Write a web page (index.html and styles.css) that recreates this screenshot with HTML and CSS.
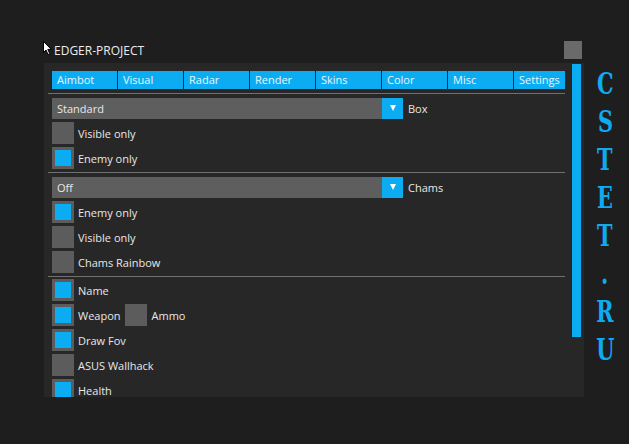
FILE: index.html
```html
<!DOCTYPE html>
<html>
<head>
<meta charset="utf-8">
<link rel="stylesheet" href="styles.css">
</head>
<body>
<div class="app">
  <div class="window">
    <div class="titlebar">
      <span class="title">EDGER-PROJECT</span>
      <span class="close"></span>
    </div>
    <div class="panel">
      <div class="content">
        <div class="tabs">
          <span class="tab">Aimbot</span>
          <span class="tab">Visual</span>
          <span class="tab">Radar</span>
          <span class="tab">Render</span>
          <span class="tab">Skins</span>
          <span class="tab">Color</span>
          <span class="tab">Misc</span>
          <span class="tab">Settings</span>
        </div>
        <div class="sep first"></div>
        <div class="row">
          <div class="combo"><span class="combo-value">Standard</span><span class="combo-btn"></span></div>
          <span class="combo-label">Box</span>
        </div>
        <div class="row"><span class="cb"></span><span class="label">Visible only</span></div>
        <div class="row"><span class="cb on"></span><span class="label">Enemy only</span></div>
        <div class="sep"></div>
        <div class="row">
          <div class="combo"><span class="combo-value">Off</span><span class="combo-btn"></span></div>
          <span class="combo-label">Chams</span>
        </div>
        <div class="row"><span class="cb on"></span><span class="label">Enemy only</span></div>
        <div class="row"><span class="cb"></span><span class="label">Visible only</span></div>
        <div class="row"><span class="cb"></span><span class="label">Chams Rainbow</span></div>
        <div class="sep tight"></div>
        <div class="row"><span class="cb on"></span><span class="label">Name</span></div>
        <div class="row"><span class="cb on"></span><span class="label">Weapon</span><span class="cb inline"></span><span class="label">Ammo</span></div>
        <div class="row"><span class="cb on"></span><span class="label">Draw Fov</span></div>
        <div class="row"><span class="cb"></span><span class="label">ASUS Wallhack</span></div>
        <div class="row"><span class="cb on"></span><span class="label">Health</span></div>
      </div>
      <div class="scrollbar"></div>
    </div>
  </div>
  <div class="brand">
    <span>C</span><span>S</span><span>T</span><span>E</span><span>T</span><span>.</span><span>R</span><span>U</span>
  </div>
</div>
<svg class="cursor" width="10" height="15" viewBox="0 0 10 15">
  <path d="M0.5 0.5 L0.5 11.5 L3 9 L5 13.5 L6.8 12.7 L4.8 8.4 L8.3 8.4 Z" fill="#fff" stroke="#000" stroke-width="1"/>
</svg>
</body>
</html>
```
FILE: styles.css
```css
* { box-sizing: border-box; }
html, body {
  margin: 0;
  padding: 0;
  background: #1e1e1e;
  width: 629px;
  height: 444px;
  overflow: hidden;
  font-family: "Open Sans", "Noto Sans", sans-serif;
  font-size: 11px;
  color: #e8e8e8;
}
.app {
  display: flex;
  padding: 41px 0 0 44px;
}
.window {
  width: 540px;
  display: flex;
  flex-direction: column;
}
.titlebar {
  height: 22px;
  display: flex;
  justify-content: space-between;
  align-items: flex-start;
}
.title {
  margin: 1px 0 0 10px;
  font-size: 12px;
  color: #ececec;
  line-height: 17px;
}
.close {
  width: 18px;
  height: 18px;
  background: #6a6a6a;
  margin-right: 2px;
}
.panel {
  height: 334px;
  background: #272727;
  display: flex;
  padding-left: 4px;
  overflow: hidden;
}
.content {
  width: 517px;
  padding-top: 8px;
  display: flex;
  flex-direction: column;
  gap: 3px;
}
.tabs {
  display: flex;
  gap: 1px;
  margin-left: 4px;
  height: 18px;
  overflow: hidden;
  flex: none;
}
.tab {
  flex: none;
  width: 65px;
  background: #0cacf3;
  color: #eaf6fd;
  padding-left: 5px;
  line-height: 18px;
}
.sep {
  flex: none;
  height: 1px;
  background: #707070;
}
.sep.first { margin-top: 1px; }
.sep.tight { margin-bottom: -1px; }
.row {
  display: flex;
  align-items: center;
  margin-left: 4px;
  height: 22px;
  flex: none;
}
.combo {
  display: flex;
  width: 351px;
  height: 21px;
  background: #5e5e5e;
}
.combo-value {
  flex: 1;
  padding-left: 5px;
  line-height: 21px;
}
.combo-btn {
  width: 21px;
  height: 21px;
  background: #0cacf3;
  display: flex;
  align-items: center;
  justify-content: center;
}
.combo-btn::after {
  content: "";
  border-left: 3.5px solid transparent;
  border-right: 3.5px solid transparent;
  border-top: 6px solid #fff;
}
.combo-label { margin-left: 5px; }
.cb {
  width: 22px;
  height: 22px;
  background: #5c5c5c;
  padding: 3px;
  flex: none;
}
.cb.on::after {
  content: "";
  display: block;
  width: 100%;
  height: 100%;
  background: #0cacf3;
}
.cb.inline { margin-left: 4px; }
.label { margin-left: 4px; }
.cb.inline + .label { margin-left: 5px; }
.scrollbar {
  width: 9px;
  height: 273px;
  margin: 1px 0 0 7px;
  background: #0cacf3;
}
.brand {
  width: 42px;
  display: flex;
  flex-direction: column;
  align-items: center;
  padding-top: 24px;
  font-family: "DejaVu Serif", "Liberation Serif", serif;
  font-weight: bold;
  font-stretch: condensed;
  font-size: 29px;
  line-height: 38px;
  color: #0eaaf2;
}
.brand span {
  display: block;
  transform: scaleX(0.8);
}
.cursor {
  position: absolute;
  left: 43px;
  top: 41px;
}
```
